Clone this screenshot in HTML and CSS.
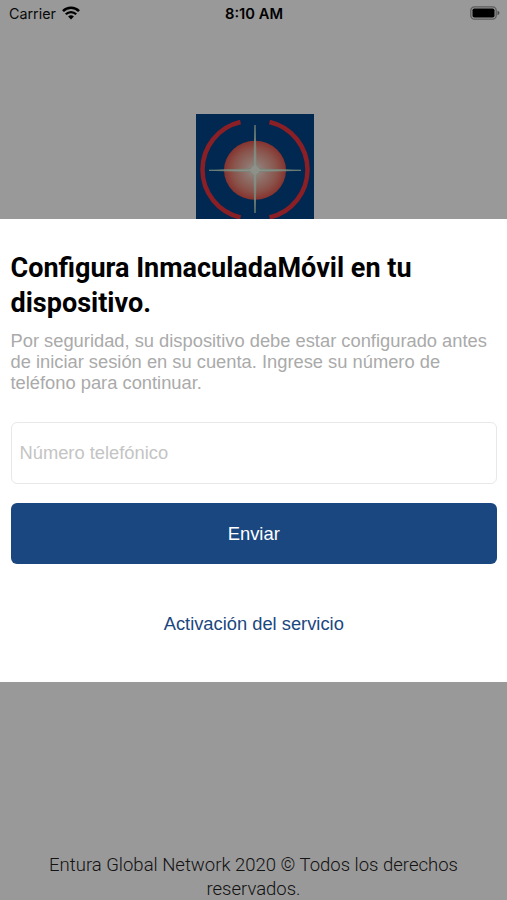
FILE: index.html
```html
<!DOCTYPE html>
<html lang="es">
<head>
    <meta charset="UTF-8">
    <meta name="viewport" content="width=device-width, initial-scale=1.0">
    <title>InmaculadaMóvil</title>
    <link rel="stylesheet" href="styles.css">
</head>
<body>

    <div class="page">
        <header class="status-bar">
            <div class="carrier">
                <span>Carrier</span>
                <svg class="wifi" viewBox="0 0 18 14" width="18" height="14">
                    <path d="M1 5.1 A11.3 11.3 0 0 1 17 5.1" fill="none" stroke="#000" stroke-width="2.6"/>
                    <path d="M3.8 8.3 A7.3 7.3 0 0 1 14.2 8.3" fill="none" stroke="#000" stroke-width="2.3"/>
                    <path d="M6.1 10.6 A4.2 4.2 0 0 1 11.9 10.6 L9 13.6 Z"/>
                </svg>
            </div>
            <strong class="time">8:10 AM</strong>
            <div class="battery">
                <svg viewBox="0 0 30 14" width="30" height="14">
                    <rect x="0.8" y="0.8" width="25.4" height="12.4" rx="3.6" fill="none" stroke="#000" stroke-opacity="0.4" stroke-width="1.3"/>
                    <rect x="2.5" y="2.5" width="22" height="9" rx="1.8"/>
                    <path d="M27.5 4.8 Q29.5 5.4 29.5 7 Q29.5 8.6 27.5 9.2 Z" fill-opacity="0.5"/>
                </svg>
            </div>
        </header>

        <svg class="logo" viewBox="0 0 118 118" width="118" height="118">
            <defs>
                <radialGradient id="globe">
                    <stop offset="0" stop-color="#f4eee8"/>
                    <stop offset="0.3" stop-color="#eec0b4"/>
                    <stop offset="0.7" stop-color="#e58c7e"/>
                    <stop offset="1" stop-color="#e0564e"/>
                </radialGradient>
            </defs>
            <rect width="118" height="118" fill="#004488"/>
            <path d="M44.5 8 A49 49 0 0 0 44.5 103.5" fill="none" stroke="#e63440" stroke-width="4.5"/>
            <path d="M73.5 8 A49 49 0 0 1 73.5 103.5" fill="none" stroke="#e63440" stroke-width="4.5"/>
            <ellipse cx="59" cy="56.3" rx="31" ry="29.5" fill="url(#globe)"/>
            <path d="M59 11 L60.3 51 L64 55 L105 56.3 L64 57.6 L60.3 61 L59 99 L57.7 61 L54 57.6 L13 56.3 L54 55 L57.7 51 Z" fill="#eef0e6" stroke="#c0dcc4" stroke-width="0.8"/>
        </svg>

        <footer class="footer">Entura Global Network 2020 © Todos los derechos reservados.</footer>
    </div>

    <div class="overlay">
        <div class="modal">
            <h1 class="modal-title">Configura InmaculadaMóvil en tu dispositivo.</h1>
            <p class="modal-text">Por seguridad, su dispositivo debe estar configurado antes de iniciar sesión en su cuenta. Ingrese su número de teléfono para continuar.</p>
            <input class="phone" type="tel" placeholder="Número telefónico">
            <button class="send">Enviar</button>
            <a class="activate" href="#">Activación del servicio</a>
        </div>
    </div>

</body>
</html>
```
FILE: styles.css
```css
* {
    box-sizing: border-box;
}

body {
    margin: 0;
    font-family: "Liberation Sans", Arial, sans-serif;
    background-color: #fff;
}

.page {
    display: flex;
    flex-direction: column;
    align-items: center;
    height: 900px;
    overflow: hidden;
}

.status-bar {
    display: grid;
    grid-template-columns: 1fr auto 1fr;
    align-items: center;
    width: 100%;
    height: 27px;
    padding: 0 7px 0 9px;
    font-family: Inter, sans-serif;
    font-size: 14.3px;
    color: #111;
}

.carrier {
    display: flex;
    align-items: center;
    gap: 6px;
}

.wifi {
    margin-top: -2px;
}

.time {
    margin-right: 1px;
    font-size: 14.7px;
    font-weight: 600;
    color: #000;
}

.battery {
    display: flex;
    justify-content: flex-end;
    margin-top: -1px;
}

.logo {
    margin-top: 87px;
    margin-left: 3px;
}

.footer {
    width: 440px;
    margin-top: auto;
    margin-bottom: -1px;
    font-family: Roboto, sans-serif;
    font-size: 18.5px;
    font-weight: 300;
    line-height: 24px;
    text-align: center;
    color: #222;
}

/* dark layer behind the dialog */
.overlay {
    position: fixed;
    top: 0;
    left: 0;
    width: 100%;
    height: 901px;
    display: flex;
    align-items: center;
    background-color: rgba(0, 0, 0, 0.4);
}

.modal {
    display: flex;
    flex-direction: column;
    width: 100%;
    height: 463px;
    padding: 32px 10px 0 10.5px;
    background-color: #fff;
}

.modal-title {
    margin: 0;
    font-family: Roboto, sans-serif;
    font-size: 27px;
    font-weight: 700;
    line-height: 35px;
    color: #000;
}

.modal-text {
    margin: 9px 0 0;
    font-size: 18.32px;
    line-height: 21px;
    color: #aaa;
}

.phone {
    height: 62px;
    margin-top: 29px;
    padding: 0 8px;
    border: 1px solid #e8e8e8;
    border-radius: 6px;
    font-family: inherit;
    font-size: 18.32px;
    background-color: #fff;
}

.phone::placeholder {
    color: #c4c4c4;
}

.send {
    height: 61px;
    margin-top: 19px;
    border: none;
    border-radius: 6px;
    font-family: inherit;
    font-size: 18.4px;
    color: #fff;
    background-color: #1a4780;
}

.activate {
    align-self: center;
    margin-top: 49px;
    font-size: 18.32px;
    line-height: 21px;
    text-decoration: none;
    color: #1a4780;
}
```
